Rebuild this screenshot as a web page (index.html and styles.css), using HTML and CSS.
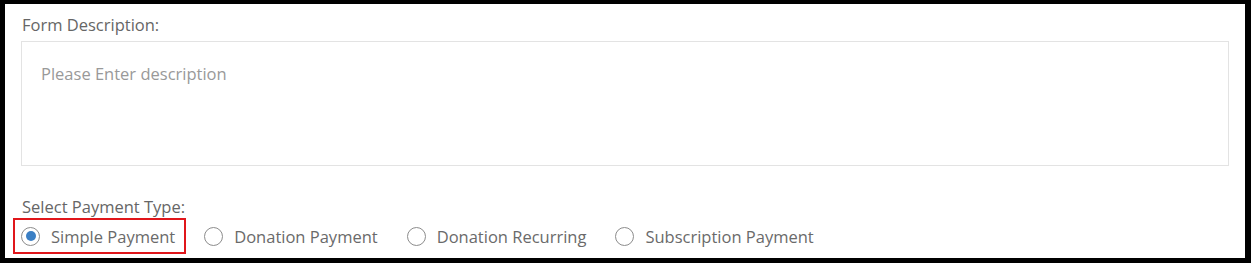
FILE: index.html
```html
<!DOCTYPE html>
<html lang="en">
  <head>
    <meta charset="UTF-8" />
    <meta name="viewport" content="width=device-width, initial-scale=1.0" />
    <title>Payment Form</title>
    <link rel="stylesheet" href="styles.css">
  </head>
  <body>
    <div class="panel">
      <div class="form-group">
        <label for="description" class="field-label">Form Description:</label>
        <textarea id="description" placeholder="Please Enter description"></textarea>
      </div>
      <div class="form-group payment">
        <span class="field-label">Select Payment Type:</span>
        <div class="radio-row">
          <label class="radio-item highlighted">
            <input type="radio" name="paymentType" value="simple" checked />
            <span>Simple Payment</span>
          </label>
          <label class="radio-item">
            <input type="radio" name="paymentType" value="donation" />
            <span>Donation Payment</span>
          </label>
          <label class="radio-item">
            <input type="radio" name="paymentType" value="recurring" />
            <span>Donation Recurring</span>
          </label>
          <label class="radio-item">
            <input type="radio" name="paymentType" value="subscription" />
            <span>Subscription Payment</span>
          </label>
        </div>
      </div>
    </div>
  </body>
</html>
```

FILE: styles.css
```css
html, body {
  margin: 0;
  background: #000;
}
body {
  font-family: "Open Sans", Arial, sans-serif;
  font-size: 16.5px;
  color: #666;
  padding: 4px 6px 5px 5px;
}
.panel {
  background: #fff;
  height: 254px;
  box-sizing: border-box;
  padding: 10px 16px 0 16px;
}
.field-label {
  display: block;
  line-height: 22px;
  margin-left: 1px;
  color: #666;
}
textarea {
  display: block;
  width: 100%;
  height: 125px;
  margin-top: 5px;
  box-sizing: border-box;
  border: 1px solid #e3e3e3;
  padding: 20px 19px;
  font-family: inherit;
  font-size: 16.5px;
  color: #555;
  resize: none;
  outline: none;
}
textarea::placeholder {
  color: #999;
}
.payment {
  margin-top: 30px;
}
.radio-row {
  display: flex;
  gap: 10px;
  margin-left: -8px;
}
.radio-item {
  display: flex;
  align-items: center;
  gap: 11px;
  height: 36px;
  box-sizing: border-box;
  padding: 0 9px 0 6px;
  border: 2px solid transparent;
  color: #6a6a6a;
}
.radio-item.highlighted {
  border-color: #e0161b;
}
.radio-item input {
  appearance: none;
  margin: 0;
  width: 19px;
  height: 19px;
  border: 1px solid #8c8c8c;
  border-radius: 50%;
  box-sizing: border-box;
  display: grid;
  place-items: center;
}
.radio-item input:checked::after {
  content: "";
  width: 10px;
  height: 10px;
  border-radius: 50%;
  background: #3b7fc4;
}
```
